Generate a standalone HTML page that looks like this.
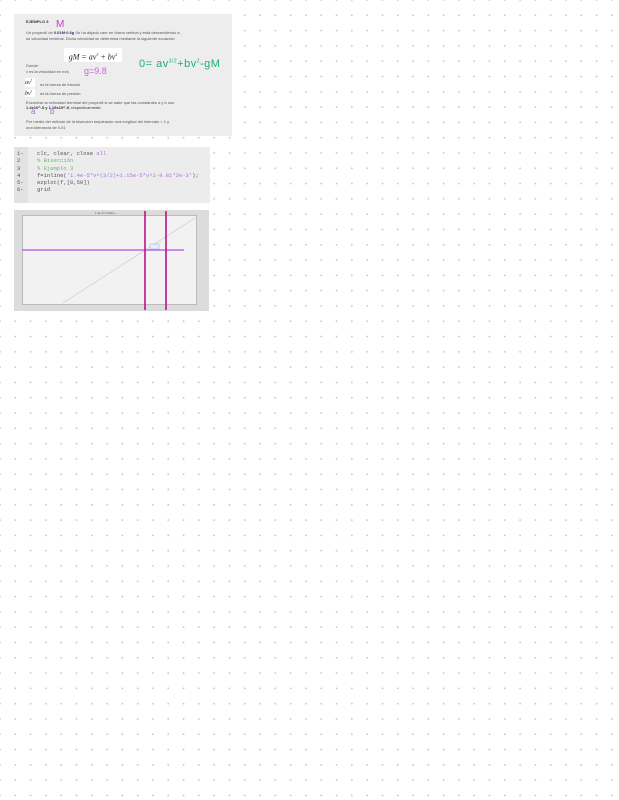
<!DOCTYPE html>
<html><head><style>
body{margin:0;width:619px;height:800px;background:#fff;position:relative;overflow:hidden;font-family:"Liberation Sans",sans-serif;
background-image:radial-gradient(circle,#c8c8c8 0.8px,transparent 1.1px);background-size:15.3px 15.3px;background-position:-7.65px -7.65px}
.a{position:absolute}
.t{position:absolute;font-size:4px;color:#555;white-space:nowrap}
</style></head><body>
<div class="a" style="left:14px;top:14px;width:218px;height:122px;background:#ededed"></div>
<div class="t" style="left:26px;top:19px;font-weight:bold;color:#333">EJEMPLO 3</div>
<div class="t" style="left:26px;top:30px">Un proyectil de <b style="color:#336">0.01M·0.6g</b> Se ha dejado caer en forma vertical y está descendiendo a</div>
<div class="t" style="left:26px;top:36px">su velocidad terminal. Dicha velocidad se determina mediante la siguiente ecuación:</div>
<div class="a" style="left:64px;top:48px;width:58px;height:14px;background:#fff;font-family:'Liberation Serif',serif;font-style:italic;font-size:8px;color:#222;line-height:14px;text-align:center">gM = av<sup style="font-size:4px">3</sup> + bv<sup style="font-size:4px">2</sup></div>
<div class="t" style="left:26px;top:63px">Donde:</div>
<div class="t" style="left:26px;top:69px">v es la velocidad en m/s</div>
<div class="a" style="left:25px;top:78px;width:10px;height:9px;background:#fff;font:italic 6px 'Liberation Serif',serif;color:#222">av<sup style="font-size:3px">3</sup></div>
<div class="t" style="left:40px;top:82px">es la fuerza de fricción</div>
<div class="a" style="left:25px;top:89px;width:10px;height:8px;background:#fff;font:italic 6px 'Liberation Serif',serif;color:#222">bv<sup style="font-size:3px">2</sup></div>
<div class="t" style="left:40px;top:91px">es la fuerza de presión</div>
<div class="t" style="left:26px;top:100px">Encontrar la velocidad terminal del proyectil si se sabe que las constantes a y b son</div>
<div class="t" style="left:26px;top:105px;color:#333"><b>1.4x10^-5 y 1.15x10^-5</b>, respectivamente.</div>
<div class="t" style="left:26px;top:119px">Por medio del método de la bisección empleando una longitud del intervalo = 1 y</div>
<div class="t" style="left:26px;top:125px">una tolerancia de 0.01</div>
<div class="t" style="left:56px;top:19px;font-size:10px;color:#c040d0">M</div>
<div class="t" style="left:84px;top:66px;font-size:9px;color:#d060e0">g=9.8</div>
<div class="t" style="left:139px;top:58px;font-size:11px;color:#20b070;letter-spacing:0.5px">0= av<sup style="font-size:5px">3/2</sup>+bv<sup style="font-size:5px">2</sup>-gM</div>
<div class="t" style="left:31px;top:107px;font-size:8px;color:#c060e0">a</div>
<div class="t" style="left:50px;top:107px;font-size:8px;color:#c060e0">b</div>

<div class="a" style="left:14px;top:147px;width:196px;height:56px;background:#ececec"></div>
<div class="a" style="left:14px;top:147px;width:14px;height:56px;background:#e2e2e2"></div>
<div class="a" style="left:17px;top:150px;font:5.5px/7.3px 'Liberation Mono',monospace;color:#555;white-space:pre">1-
2
3
4
5-
6-</div>
<div class="a" style="left:37px;top:150px;font:5.5px/7.3px 'Liberation Mono',monospace;color:#555;white-space:pre">clc, clear, close <span style="color:#b070e0">all</span>
<span style="color:#6b6">% Bisección</span>
<span style="color:#6b6">% Ejemplo 3</span>
f=inline(<span style="color:#b070e0">'1.4e-5*v^(3/2)+1.15e-5*v^2-9.81*2e-3'</span>);
ezplot(f,[0,50])
grid</div>

<div class="a" style="left:14px;top:210px;width:195px;height:101px;background:#dcdcdc"></div>
<div class="a" style="left:22px;top:215px;width:173px;height:88px;background:#f2f2f2;border:1px solid #bbb"></div>
<div class="t" style="left:95px;top:211px;font-size:3px">1.4e-5 v^(3/2)+...</div>
<svg class="a" style="left:0;top:0" width="619" height="800">
<line x1="63" y1="303" x2="195" y2="218" stroke="#c8c8d8" stroke-width="0.7"/>
<line x1="22" y1="250" x2="184" y2="250" stroke="#b050e0" stroke-width="1.2"/>
<line x1="145" y1="211" x2="145" y2="310" stroke="#c0108a" stroke-width="1.6"/>
<line x1="166" y1="211" x2="166" y2="310" stroke="#c0108a" stroke-width="1.6"/>
<rect x="150" y="244" width="9" height="5" fill="#e8f0ff" stroke="#7aa" stroke-width="0.4"/>
</svg>
</body></html>
